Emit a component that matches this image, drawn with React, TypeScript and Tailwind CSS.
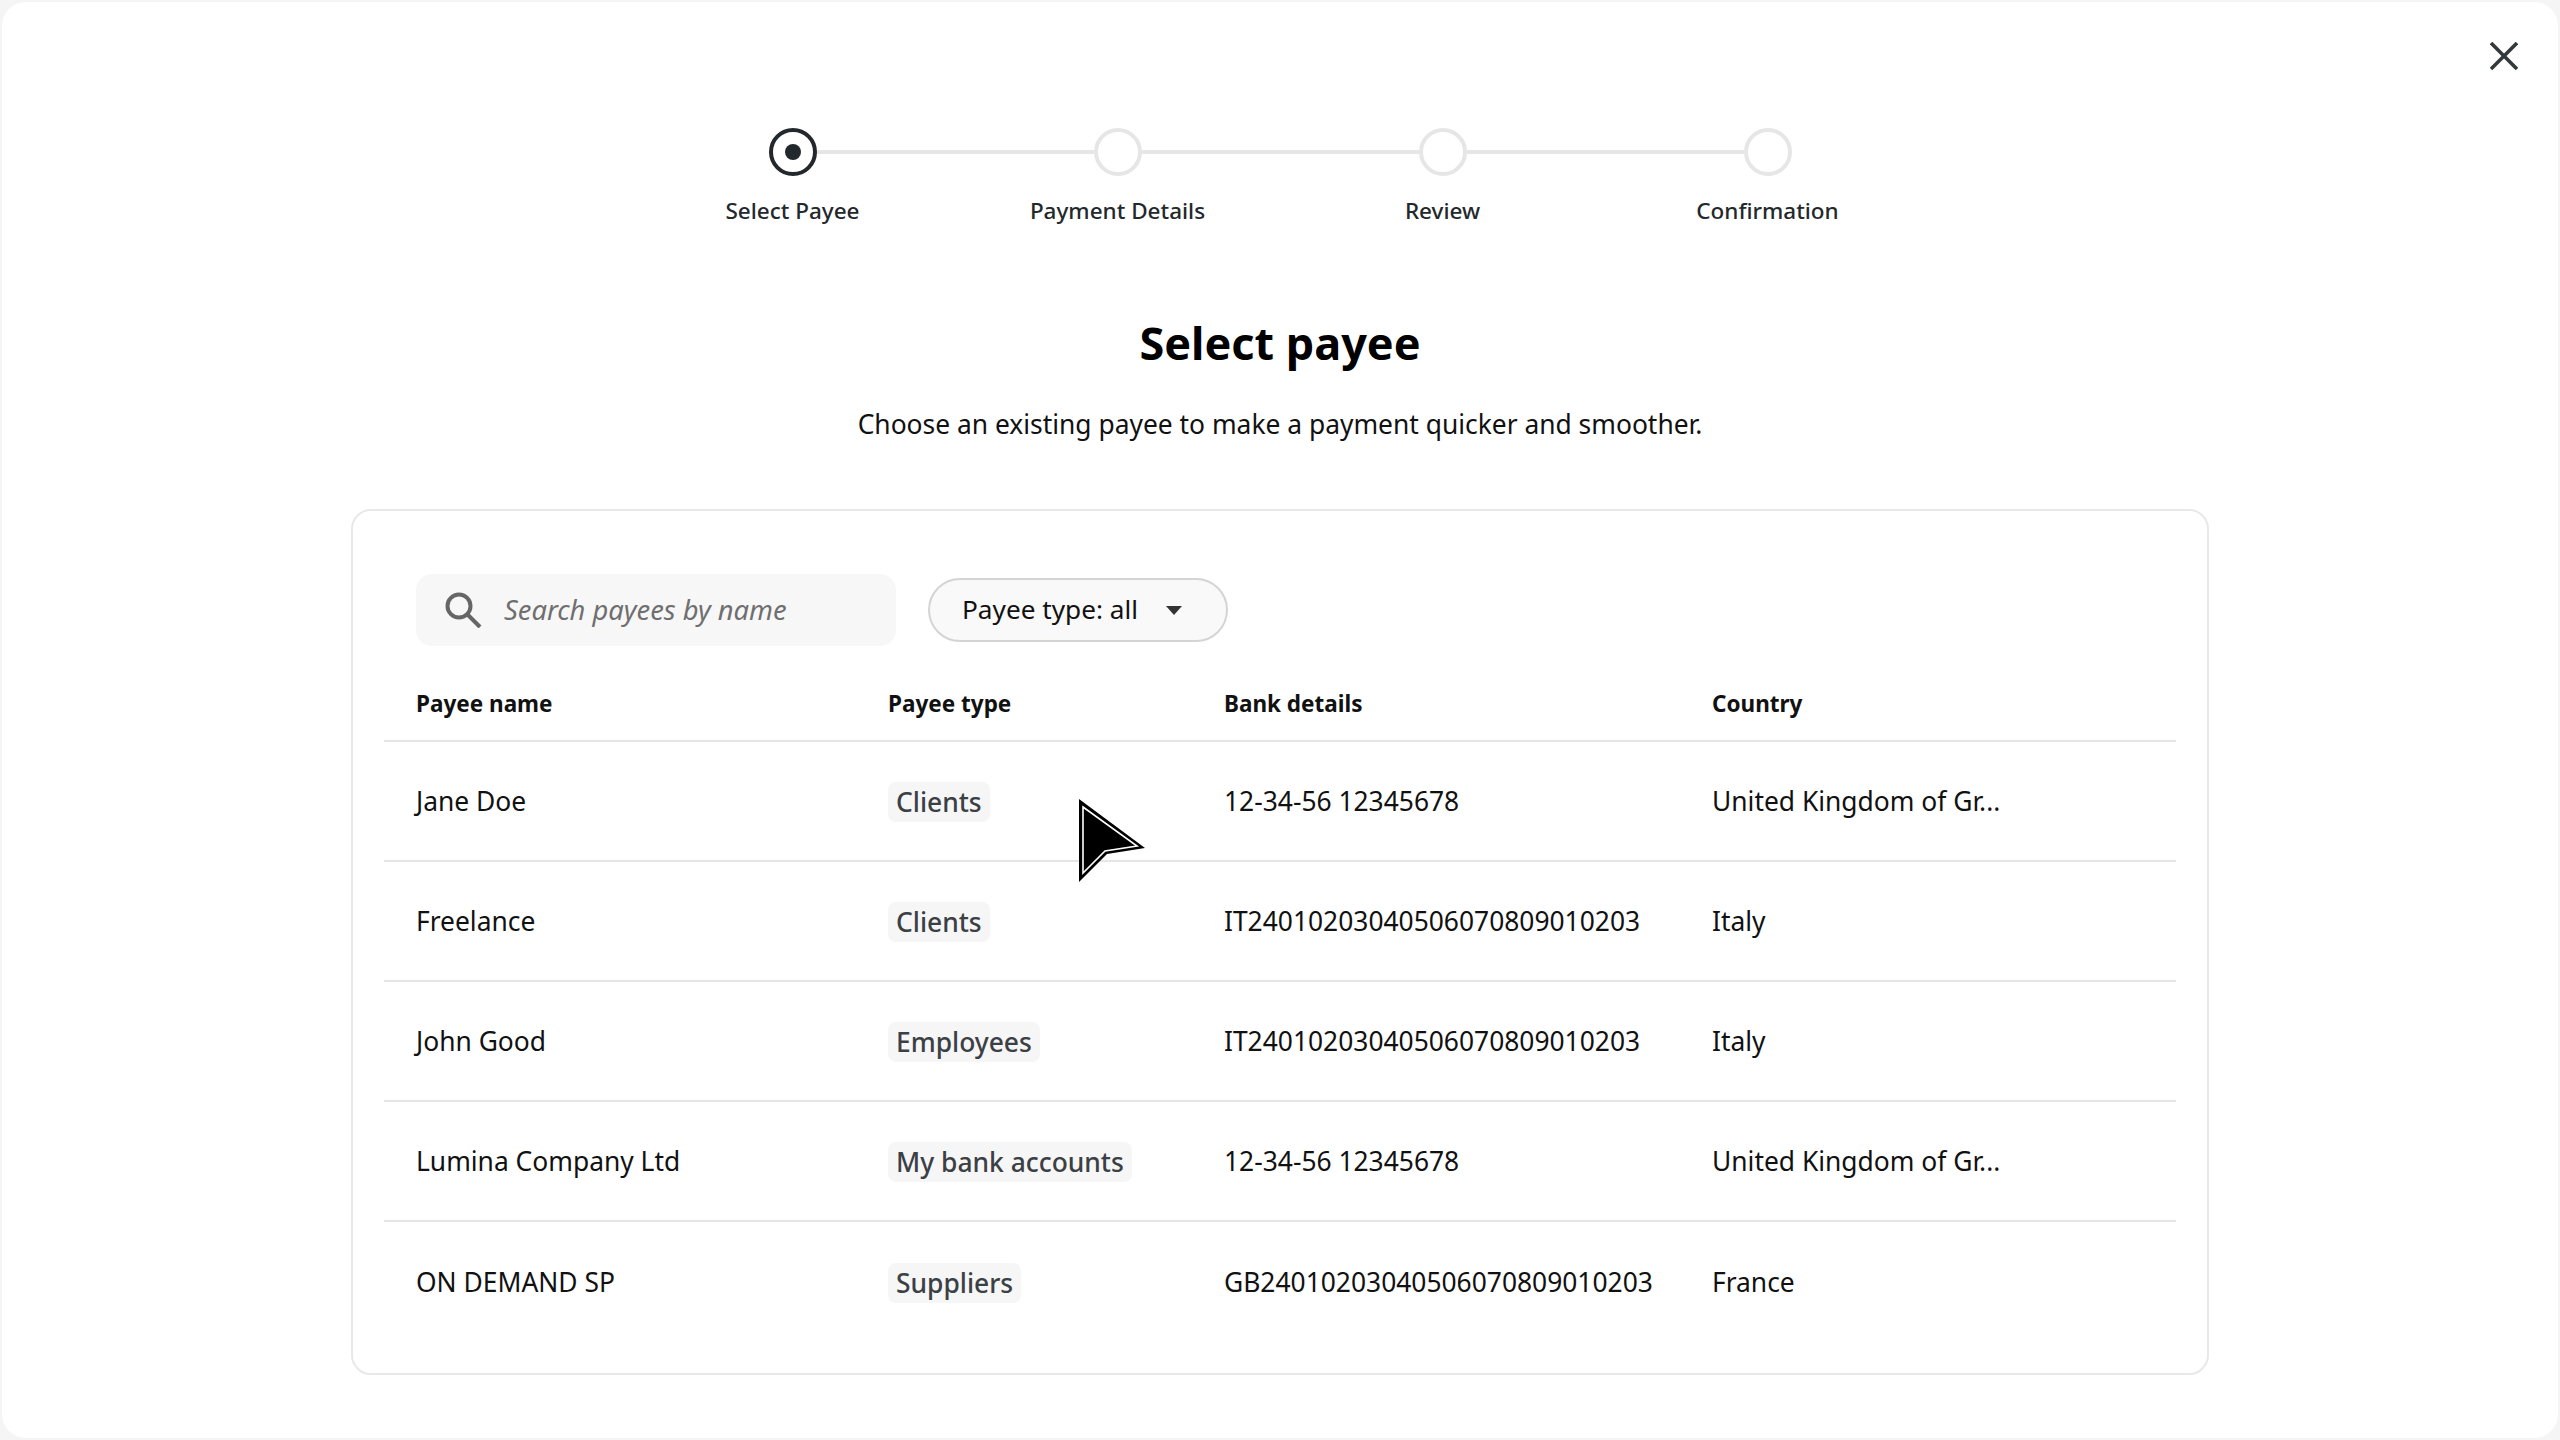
import React from 'react';

const font = "[font-family:'Noto_Sans',sans-serif]";

const steps = ['Select Payee', 'Payment Details', 'Review', 'Confirmation'];

const payees = [
  { name: 'Jane Doe', type: 'Clients', bank: '12-34-56 12345678', country: 'United Kingdom of Gr...' },
  { name: 'Freelance', type: 'Clients', bank: 'IT24010203040506070809010203', country: 'Italy' },
  { name: 'John Good', type: 'Employees', bank: 'IT24010203040506070809010203', country: 'Italy' },
  { name: 'Lumina Company Ltd', type: 'My bank accounts', bank: '12-34-56 12345678', country: 'United Kingdom of Gr...' },
  { name: 'ON DEMAND SP', type: 'Suppliers', bank: 'GB24010203040506070809010203', country: 'France' },
];

const Cursor = () => (
  <svg className="absolute left-[1077px] top-[797px]" width="66" height="83" viewBox="0 0 66 83">
    <polygon points="0,0 66,49 28,55 0,83" fill="#000" />
    <polygon points="4,8 58,47 26,52 4,74" fill="none" stroke="#fff" strokeWidth="1.6" />
  </svg>
);

const App = () => {
  return (
    <div className={`h-[1440px] bg-[#f5f5f5] p-[2px] ${font}`}>
      <div className="relative flex h-full flex-col items-center rounded-[24px] bg-white">
        {/* Close */}
        <button className="absolute right-[40px] top-[40px] h-[28px] w-[28px]">
          <svg width="28" height="28" viewBox="0 0 28 28" fill="none" stroke="#33383c" strokeWidth="3.6">
            <line x1="1" y1="1" x2="27" y2="27" />
            <line x1="27" y1="1" x2="1" y2="27" />
          </svg>
        </button>

        {/* Stepper */}
        <div className="mt-[126px] flex items-center">
          {steps.map((step, i) => (
            <React.Fragment key={step}>
              {i > 0 && <div className="h-[4px] w-[277px] bg-[#e6e6e6]" />}
              <div
                className={
                  i === 0
                    ? 'flex h-[48px] w-[48px] items-center justify-center rounded-full border-4 border-[#23282c]'
                    : 'h-[48px] w-[48px] rounded-full border-4 border-[#e6e6e6]'
                }
              >
                {i === 0 && <div className="h-[16px] w-[16px] rounded-full bg-[#23282c]" />}
              </div>
            </React.Fragment>
          ))}
        </div>
        <div className="mt-[17px] flex">
          {steps.map((step) => (
            <div key={step} className="w-[325px] text-center text-[22.5px] leading-[36px] font-medium text-[#23282c]">
              {step}
            </div>
          ))}
        </div>

        <h1 className="mt-[82px] text-[45px] leading-[64px] font-bold text-black">Select payee</h1>
        <p className="mt-[29px] text-[26.4px] leading-[40px] text-[#111]">
          Choose an existing payee to make a payment quicker and smoother.
        </p>

        {/* Card */}
        <div className="mt-[65px] w-[1858px] rounded-[20px] border-2 border-[#e8e8e8] px-[31px] pt-[63px] pb-[31px]">
          <div className="flex items-center gap-[32px] pl-[32px]">
            <div className="flex h-[72px] w-[480px] items-center gap-[22px] rounded-[16px] bg-[#f7f7f7] pl-[28px]">
              <svg width="38" height="36" viewBox="0 0 38 36" fill="none" stroke="#666" strokeWidth="4">
                <circle cx="15" cy="14" r="11.5" />
                <line x1="23.5" y1="22.5" x2="36" y2="35" />
              </svg>
              <span className="text-[27.3px] leading-[40px] text-[#6f6f6f] italic">Search payees by name</span>
            </div>
            <button className="flex h-[64px] w-[300px] items-center gap-[28px] rounded-full border-2 border-[#d4d4d4] bg-[#f9f9f9] pl-[32px] text-[26.2px] text-[#111]">
              <span>Payee type: all</span>
              <svg width="16" height="9" viewBox="0 0 16 9">
                <polygon points="0,0 16,0 8,9" fill="#333" />
              </svg>
            </button>
          </div>

          {/* Table */}
          <div className="grid h-[96px] grid-cols-[472px_336px_488px_1fr] border-b-2 border-[#e6e6e6] pt-[42px] text-[22.5px] leading-[32px] font-bold text-[#111]">
            <div className="pl-[32px]">Payee name</div>
            <div className="pl-[32px]">Payee type</div>
            <div className="pl-[32px]">Bank details</div>
            <div className="pl-[32px]">Country</div>
          </div>
          {payees.map((p, i) => (
            <div
              key={p.name}
              className={`grid h-[120px] grid-cols-[472px_336px_488px_1fr] items-center pt-[2px] text-[26.4px] text-[#111] ${
                i < payees.length - 1 ? 'border-b-2 border-[#e6e6e6]' : ''
              }`}
            >
              <div className="pl-[32px]">{p.name}</div>
              <div className="pl-[32px]">
                <span className="inline-block h-[40px] rounded-[8px] bg-[#f6f6f6] px-[8px] leading-[40px] font-medium text-[#3b4045]">
                  {p.type}
                </span>
              </div>
              <div className="pl-[32px]">{p.bank}</div>
              <div className="pl-[32px]">{p.country}</div>
            </div>
          ))}
        </div>

        <Cursor />
      </div>
    </div>
  );
};

export default App;
